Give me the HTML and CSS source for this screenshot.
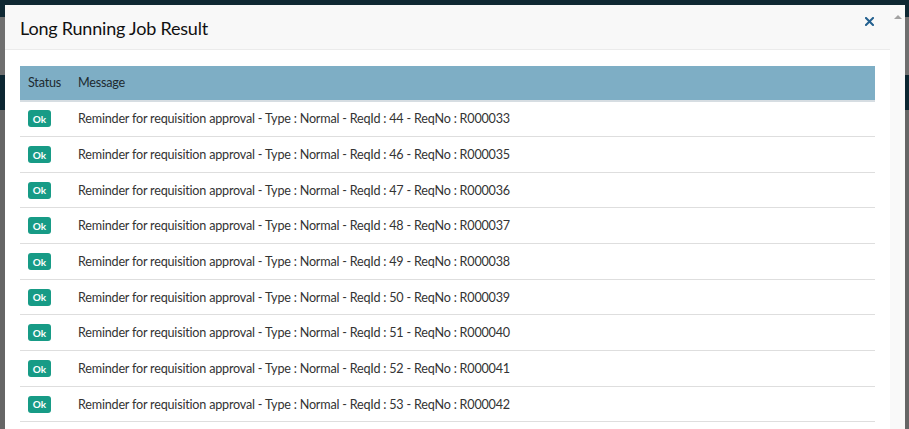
FILE: index.html
```html
<!DOCTYPE html>
<html>
<head>
<meta charset="utf-8">
<title>Long Running Job Result</title>
<link rel="stylesheet" href="styles.css">
</head>
<body>
<div class="page">
  <div class="band band-nav"></div>
  <div class="band band-gray1"></div>
  <div class="band band-nav2"></div>
  <div class="band band-rest"></div>
</div>
<div class="modal">
  <div class="modal-main">
    <div class="modal-header">
      <h4 class="modal-title">Long Running Job Result</h4>
      <svg class="close" width="9" height="9" viewBox="0 0 9 9" aria-label="close"><path d="M1 1 L8 8 M8 1 L1 8" stroke="#23608f" stroke-width="2" stroke-linecap="square" fill="none"/></svg>
    </div>
    <div class="modal-body">
      <div class="table">
        <div class="thead">
          <div class="cell">Status</div>
          <div class="cell">Message</div>
        </div>
        <div class="row"><div class="cell"><span class="badge">Ok</span></div><div class="cell">Reminder for requisition approval - Type : Normal - ReqId : 44 - ReqNo : R000033</div></div>
        <div class="row"><div class="cell"><span class="badge">Ok</span></div><div class="cell">Reminder for requisition approval - Type : Normal - ReqId : 46 - ReqNo : R000035</div></div>
        <div class="row"><div class="cell"><span class="badge">Ok</span></div><div class="cell">Reminder for requisition approval - Type : Normal - ReqId : 47 - ReqNo : R000036</div></div>
        <div class="row"><div class="cell"><span class="badge">Ok</span></div><div class="cell">Reminder for requisition approval - Type : Normal - ReqId : 48 - ReqNo : R000037</div></div>
        <div class="row"><div class="cell"><span class="badge">Ok</span></div><div class="cell">Reminder for requisition approval - Type : Normal - ReqId : 49 - ReqNo : R000038</div></div>
        <div class="row"><div class="cell"><span class="badge">Ok</span></div><div class="cell">Reminder for requisition approval - Type : Normal - ReqId : 50 - ReqNo : R000039</div></div>
        <div class="row"><div class="cell"><span class="badge">Ok</span></div><div class="cell">Reminder for requisition approval - Type : Normal - ReqId : 51 - ReqNo : R000040</div></div>
        <div class="row"><div class="cell"><span class="badge">Ok</span></div><div class="cell">Reminder for requisition approval - Type : Normal - ReqId : 52 - ReqNo : R000041</div></div>
        <div class="row"><div class="cell"><span class="badge">Ok</span></div><div class="cell">Reminder for requisition approval - Type : Normal - ReqId : 53 - ReqNo : R000042</div></div>
      </div>
    </div>
  </div>
  <div class="scrollbar"><span class="arrow"></span></div>
</div>
</body>
</html>
```

FILE: styles.css
```css
html, body {
  margin: 0;
  padding: 0;
  height: 100%;
  overflow: hidden;
}
body {
  font-family: "Lato", "Noto Sans", sans-serif;
  background: #646464;
  color: #333;
}
.page {
  display: flex;
  flex-direction: column;
  height: 100%;
}
.band-nav { height: 17px; background: #0f2833; }
.band-gray1 { height: 58px; background: #6f6f6f; }
.band-nav2 { height: 35px; background: #0c2631; }
.band-rest { flex: 1; background: #666666; }

.modal {
  position: fixed;
  top: 5px;
  left: 5px;
  width: 900px;
  bottom: 0;
  display: flex;
  background: #fff;
  overflow: hidden;
}
.modal-main {
  flex: 1;
  display: flex;
  flex-direction: column;
  min-width: 0;
  overflow: hidden;
}
.modal-header {
  flex-shrink: 0;
  height: 44px;
  background: #f8f8f8;
  border-bottom: 1px solid #ebebeb;
  display: flex;
  align-items: center;
  justify-content: space-between;
  padding: 0 16px 0 15px;
}
.modal-title {
  margin: 0;
  font-size: 18px;
  font-weight: normal;
  color: #111;
  letter-spacing: -0.2px;
  padding-top: 1px;
}
.close {
  display: block;
  margin-top: -11px;
}
.modal-body {
  flex-shrink: 0;
  padding: 16px 15px 0 15px;
}
.table {
  display: flex;
  flex-direction: column;
}
.thead, .row {
  display: grid;
  grid-template-columns: 50px 1fr;
  align-items: center;
  flex-shrink: 0;
}
.thead {
  height: 33.5px;
  background: #7eaec5;
  border-bottom: 2px solid #d6dde2;
  font-size: 12.6px;
  letter-spacing: -0.2px;
  color: #1d2a30;
}
.row {
  height: 34.67px;
  border-bottom: 1px solid #dedede;
  font-size: 12.6px;
  letter-spacing: -0.2px;
  color: #333;
}
.cell {
  padding-left: 8px;
  white-space: nowrap;
}
.badge {
  display: inline-flex;
  align-items: center;
  justify-content: center;
  width: 23px;
  height: 17px;
  border-radius: 3px;
  background: #179b86;
  color: #fff;
  font-size: 10px;
  font-weight: bold;
  letter-spacing: 0;
  vertical-align: middle;
}
.scrollbar {
  width: 15px;
  background: #f9f9f9;
  display: flex;
  justify-content: center;
  align-items: flex-start;
  padding-top: 10px;
}
.arrow {
  width: 0;
  height: 0;
  border-left: 4px solid transparent;
  border-right: 4px solid transparent;
  border-bottom: 4px solid #a3a3a3;
}
```
